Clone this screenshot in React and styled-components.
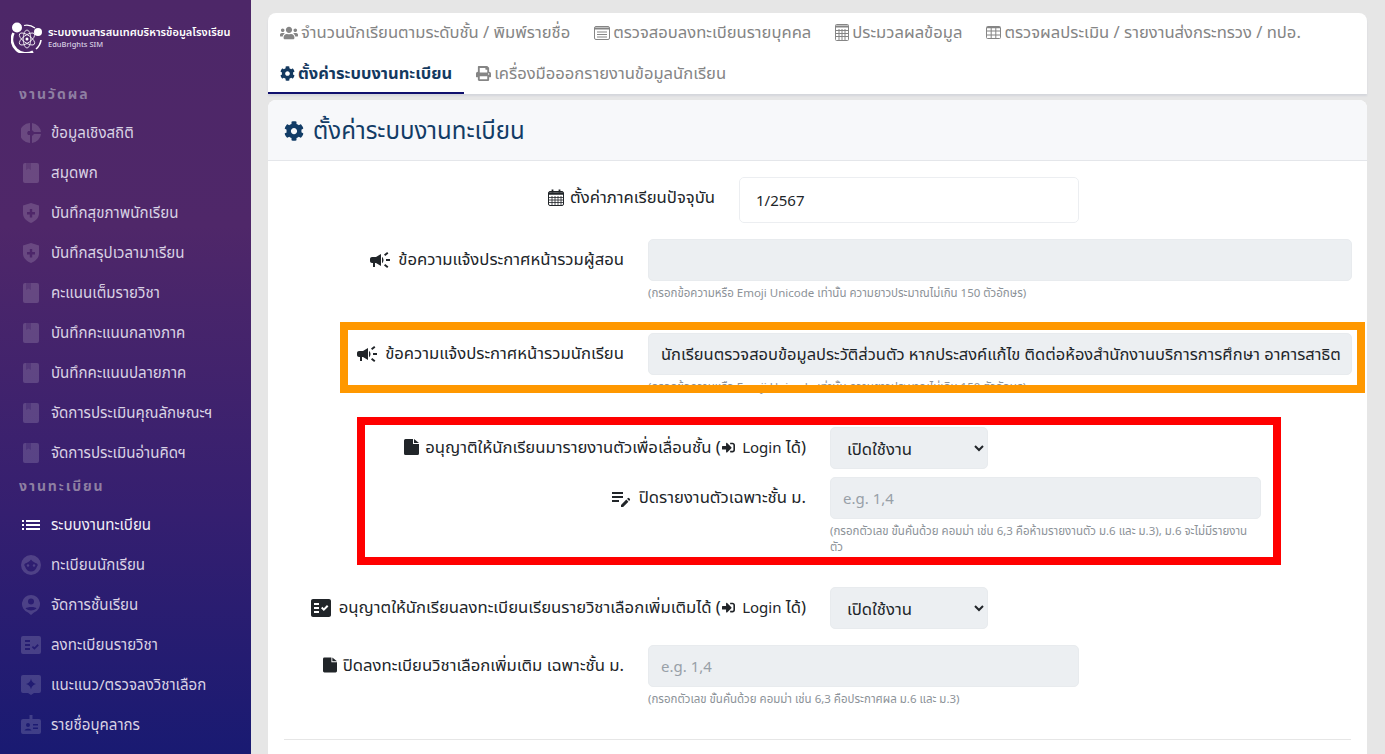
import React from 'react';
import styled, { createGlobalStyle } from 'styled-components';
import { FaUsers, FaCog, FaPrint, FaSignInAlt } from 'react-icons/fa';
import { MdCampaign, MdEditNote, MdFactCheck } from 'react-icons/md';

const GlobalStyle = createGlobalStyle`
  html, body {
    margin: 0;
    height: 100%;
    overflow: hidden;
    background: #e6e6e6;
    font-family: "Noto Sans", "Noto Sans Thai", "Liberation Sans", sans-serif;
  }
  * { box-sizing: border-box; }
`;

const Page = styled.div`
  display: flex;
  height: 754px;
  position: relative;
  overflow: hidden;
`;

const Sidebar = styled.aside`
  width: 251px;
  flex-shrink: 0;
  height: 754px;
  overflow: hidden;
  background: linear-gradient(180deg, #4d2768 0%, #4f2769 30%, #351f70 68%, #191a72 100%);
`;

const Brand = styled.div`
  display: flex;
  align-items: center;
  gap: 5px;
  height: 62px;
  padding: 13px 0 0 11px;
  margin-bottom: 11px;
  color: #fff;
`;

const BrandText = styled.div`
  display: flex;
  flex-direction: column;
  line-height: 12px;
`;

const BrandTitle = styled.span`
  font-size: 11px;
  font-weight: 600;
  white-space: nowrap;
`;

const BrandSub = styled.span`
  font-size: 7.5px;
  font-weight: 500;
  color: #d8cfe3;
`;

const SectionLabel = styled.div`
  height: 40px;
  padding-left: 19px;
  margin-top: ${p => p.$top || 0}px;
  font-size: 14px;
  font-weight: 700;
  line-height: 42px;
  letter-spacing: 1.9px;
  color: #8e7fa2;
`;

const MenuItem = styled.div`
  display: flex;
  align-items: center;
  gap: 10px;
  height: 40px;
  padding-left: 21px;
  font-size: 15.1px;
  white-space: nowrap;
  color: ${p => (p.$active ? '#f2eff7' : '#d9d2e4')};

  svg {
    flex-shrink: 0;
    width: 20px;
    height: 20px;
    color: ${p => (p.$active ? '#ffffff' : 'rgba(255, 255, 255, 0.16)')};
  }
`;

const Main = styled.main`
  flex: 1;
  padding: 13px 18px 0 17px;
  min-width: 0;
`;

const TabCard = styled.nav`
  display: flex;
  flex-wrap: wrap;
  height: 81px;
  background: #fff;
  border-radius: 8px 8px 0 0;
  box-shadow: 0 2px 2px #d4d6dc;
  margin-bottom: 6px;
`;

const Tab = styled.div`
  display: flex;
  align-items: center;
  gap: 3px;
  height: 40px;
  padding: 1px 12px 0;
  font-size: ${p => (p.$active ? 16.5 : 16.6)}px;
  white-space: nowrap;
  color: ${p => (p.$active ? '#14395f' : '#858585')};
  font-weight: ${p => (p.$active ? 700 : 400)};
  border-bottom: 2px solid ${p => (p.$active ? '#10106e' : 'transparent')};

  svg {
    flex-shrink: 0;
  }
`;

const Panel = styled.section`
  background: #fff;
  border-radius: 8px 8px 0 0;
  height: 660px;
  overflow: hidden;
`;

const PanelHeader = styled.header`
  display: flex;
  align-items: center;
  gap: 9px;
  height: 61px;
  padding: 2px 16px 0;
  background: #f7f8fa;
  border-bottom: 1px solid #e4e6ea;
  color: #123c66;
  font-size: 24px;

  svg {
    font-size: 20px;
  }
`;

const PanelBody = styled.div`
  padding: 16px 16px 0;
`;

const FormRow = styled.div`
  display: grid;
  grid-template-columns: ${p => p.$label}px ${p => p.$field}px;
  column-gap: 24px;
  margin-bottom: ${p => (p.$tight ? 8 : 16)}px;
`;

const Label = styled.label`
  display: flex;
  justify-content: flex-end;
  align-items: flex-start;
  gap: 6px;
  padding-top: 9px;
  font-size: 16.7px;
  line-height: 22px;
  white-space: nowrap;
  color: #212529;

  > svg {
    flex-shrink: 0;
    margin-top: ${p => p.$iconTop ?? 3}px;
  }
`;

const InlineIcon = styled.span`
  display: inline-flex;
  margin: 0 3px 0 1px;
  vertical-align: -1px;

  svg {
    font-size: 13px;
  }
`;

const Latin = styled.span`
  font-size: 15px;
`;

const Field = styled.div`
  display: block;
  width: 100%;
  height: ${p => (p.$plain ? 46 : 42)}px;
  padding: 0 ${p => (p.$plain ? 16 : 12)}px;
  line-height: ${p => (p.$plain ? 44 : 40)}px;
  font-size: ${p => (p.$plain || p.$muted ? 15 : 16.5)}px;
  white-space: nowrap;
  overflow: hidden;
  border: 1px solid ${p => (p.$plain ? '#eceef1' : '#e8ebee')};
  border-radius: 5px;
  background: ${p => (p.$plain ? '#fff' : '#eceff2')};
  color: ${p => (p.$muted ? '#98a0a8' : '#212529')};
`;

const SelectBox = styled.select`
  display: block;
  width: 100%;
  height: 42px;
  padding: 0 12px;
  font: inherit;
  font-size: 16.7px;
  border: 1px solid #e8ebee;
  border-radius: 5px;
  background: #eceff2;
  color: #212529;
`;

const Help = styled.div`
  margin: 4px 0 16px;
  font-size: 11.5px;
  line-height: 16px;
  color: #8c9298;
`;

const Divider = styled.hr`
  margin: 0;
  border: 0;
  border-top: 1px solid #e6e6e6;
`;

// annotations drawn on top of the form in the screenshot
const Marker = styled.div`
  position: absolute;
  left: ${p => p.$x}px;
  top: ${p => p.$y}px;
  width: ${p => p.$w}px;
  height: ${p => p.$h}px;
  border: 8px solid ${p => p.$color};
  pointer-events: none;
`;

const Logo = () => (
  <svg width="32" height="31" viewBox="0 0 32 31" fill="none" stroke="#fff" style={{ flexShrink: 0 }}>
    <path d="M2.500 11 A14 14 0 0 0 22 29.500" strokeWidth="2.6" />
    <path d="M13 3.500 A14 14 0 0 1 24 6" strokeWidth="1.2" />
    <path d="M30 18 A14 14 0 0 1 25 27" strokeWidth="1.6" />
    <ellipse cx="16" cy="17" rx="9" ry="3.800" strokeWidth="0.8" transform="rotate(35 16 17)" />
    <ellipse cx="16" cy="17" rx="9" ry="3.800" strokeWidth="0.8" transform="rotate(-35 16 17)" />
    <ellipse cx="16" cy="17" rx="9" ry="3.800" strokeWidth="0.8" transform="rotate(90 16 17)" />
    <circle cx="16" cy="17" r="1.500" fill="#fff" stroke="none" />
    <circle cx="6" cy="5.500" r="5" fill="#fff" stroke="none" />
    <circle cx="27" cy="10" r="4" fill="#fff" stroke="none" />
  </svg>
);

const PieIcon = () => (
  <svg viewBox="0 0 20 20" fill="currentColor">
    <path d="M9 0v8H7.200A2.500 2.500 0 0 0 7.200 12H9v8A10 10 0 0 1 9 0zM11 0a10 10 0 0 1 9 9h-7.200A2.500 2.500 0 0 0 11 7.200zM20 11a10 10 0 0 1-9 9v-7.200a2.500 2.500 0 0 0 1.800-1.800z" />
  </svg>
);

const BookIcon = () => (
  <svg viewBox="0 0 20 20" fill="currentColor">
    <path fillRule="evenodd" d="M4 0h12a2 2 0 0 1 2 2v16a2 2 0 0 1-2 2H4a2 2 0 0 1-2-2V2a2 2 0 0 1 2-2zm1 0v7l2.500-1.800L10 7V0z" />
    <path d="M5 0h5v7L7.500 5.200 5 7z" opacity="0.6" />
  </svg>
);

const ShieldIcon = () => (
  <svg viewBox="0 0 20 20" fill="currentColor">
    <path fillRule="evenodd" d="M10 0l8 2.500v8c0 4.500-3.500 7.500-8 9.500-4.500-2-8-5-8-9.500v-8zM8.800 6v3H6v2.400h2.800v3h2.400v-3H14V9h-2.800V6z" />
  </svg>
);

const FaceIcon = () => (
  <svg viewBox="0 0 20 20" fill="currentColor">
    <path fillRule="evenodd" d="M10 0a10 10 0 1 1 0 20 10 10 0 0 1 0-20zM4 8.500a2 2 0 0 0 0 3c1 3 3 5 6 5s5-2 6-5a2 2 0 0 0 0-3C14 8 11.500 6.500 10 4.500 8.500 6.500 6 8 4 8.500z" />
    <circle cx="7" cy="10.500" r="1.200" />
    <circle cx="13" cy="10.500" r="1.200" />
  </svg>
);

const PersonPinIcon = () => (
  <svg viewBox="0 0 20 20" fill="currentColor">
    <path fillRule="evenodd" d="M10 0a9 9 0 0 1 3 17.500L10 20l-3-2.500A9 9 0 0 1 10 0zm0 3.500a3 3 0 1 0 0 6 3 3 0 0 0 0-6zM4.500 13.500c3 2.600 8 2.600 11 0-1-2-9-2-11 0z" />
  </svg>
);

const ChecklistIcon = () => (
  <svg viewBox="0 0 20 20" fill="currentColor">
    <path fillRule="evenodd" d="M2 1h16a2 2 0 0 1 2 2v14a2 2 0 0 1-2 2H2a2 2 0 0 1-2-2V3a2 2 0 0 1 2-2zm2 4v2h5V5zm0 4v2h5V9zm0 4v2h5v-2zm8-2l-1.200 1.200 2.600 2.600 4.400-4.400L16.600 9l-3.200 3.200z" />
  </svg>
);

const SparkIcon = () => (
  <svg viewBox="0 0 20 20" fill="currentColor">
    <path fillRule="evenodd" d="M2 0h16a2 2 0 0 1 2 2v14a2 2 0 0 1-2 2h-5l-3 2-3-2H2a2 2 0 0 1-2-2V2a2 2 0 0 1 2-2zm8 3.500c-.5 3-2 4.500-5 5.500 3 1 4.500 2.500 5 5.500.5-3 2-4.500 5-5.500-3-1-4.500-2.500-5-5.500z" />
  </svg>
);

const BadgeIcon = () => (
  <svg viewBox="0 0 20 20" fill="currentColor">
    <path fillRule="evenodd" d="M8.500 0h3v4H18a2 2 0 0 1 2 2v11a2 2 0 0 1-2 2H2a2 2 0 0 1-2-2V6a2 2 0 0 1 2-2h6.500zM7 8a2 2 0 1 0 0 4 2 2 0 0 0 0-4zm-3.500 7.500h7c-.5-2.500-6.500-2.500-7 0zM12 9v1.500h5V9zm0 3.500V14h5v-1.500z" />
  </svg>
);

const ListIcon = () => (
  <svg viewBox="0 0 20 20" fill="currentColor">
    <path d="M1 5h2v2H1zM5 5h14v2H5zM1 9h2v2H1zM5 9h14v2H5zM1 13h2v2H1zM5 13h14v2H5z" />
  </svg>
);

const ListAltIcon = () => (
  <svg width="16" height="14" viewBox="0 0 16 14" fill="none" stroke="currentColor">
    <rect x="0.500" y="0.500" width="15" height="13" rx="1.500" />
    <path d="M1 2.500h14" strokeWidth="2" />
    <path d="M3 6h10M3 8.500h10M3 11h10" />
  </svg>
);

const CalculatorIcon = () => (
  <svg width="14" height="17" viewBox="0 0 14 17" fill="none" stroke="currentColor">
    <rect x="0.500" y="0.500" width="13" height="16" rx="1" />
    <path d="M1 2.500h12" strokeWidth="2" />
    <path d="M1 6.500h12M1 9.500h12M1 12.500h12M4 5v11M7 5v11M10 5v11" />
  </svg>
);

const GridIcon = () => (
  <svg width="15" height="13" viewBox="0 0 15 13" fill="none" stroke="currentColor">
    <rect x="0.500" y="0.500" width="14" height="12" rx="1" />
    <path d="M1 1.500h13" strokeWidth="1.500" />
    <path d="M1 5h13M1 9h13M5.200 1v11M9.800 1v11" />
  </svg>
);

const UsersIcon = () => <FaUsers size={18} />;
const GearIcon = () => <FaCog size={15} />;
const PrinterIcon = () => <FaPrint size={15} />;

const CalendarIcon = () => (
  <svg width="16" height="17" viewBox="0 0 16 17" fill="none" stroke="#212529">
    <rect x="0.500" y="2.500" width="15" height="14" rx="1.500" />
    <path d="M1 4.500h14" strokeWidth="2.400" />
    <path d="M1 8.500h14M1 11h14M1 13.500h14M4 7v9M7 7v9M10 7v9M13 7v9" strokeWidth="0.800" />
    <path d="M4.500 0.500v3M11.500 0.500v3" strokeWidth="1.800" />
  </svg>
);

const DocIcon = ({ width = 15 }) => (
  <svg width={width} height="16" viewBox="0 0 15 16" fill="#212529">
    <path d="M1.500 0H9v5h6v9.500a1.500 1.500 0 0 1-1.500 1.500h-12A1.500 1.500 0 0 1 0 14.500v-13A1.500 1.500 0 0 1 1.500 0zM10 0l5 4h-5z" />
  </svg>
);

const groups = [
  {
    title: 'งานวัดผล',
    items: [
      ['ข้อมูลเชิงสถิติ', PieIcon],
      ['สมุดพก', BookIcon],
      ['บันทึกสุขภาพนักเรียน', ShieldIcon],
      ['บันทึกสรุปเวลามาเรียน', ShieldIcon],
      ['คะแนนเต็มรายวิชา', BookIcon],
      ['บันทึกคะแนนกลางภาค', BookIcon],
      ['บันทึกคะแนนปลายภาค', BookIcon],
      ['จัดการประเมินคุณลักษณะฯ', BookIcon],
      ['จัดการประเมินอ่านคิดฯ', BookIcon],
    ],
  },
  {
    title: 'งานทะเบียน',
    top: -8,
    items: [
      ['ระบบงานทะเบียน', ListIcon, true],
      ['ทะเบียนนักเรียน', FaceIcon],
      ['จัดการชั้นเรียน', PersonPinIcon],
      ['ลงทะเบียนรายวิชา', ChecklistIcon],
      ['แนะแนว/ตรวจลงวิชาเลือก', SparkIcon],
      ['รายชื่อบุคลากร', BadgeIcon],
    ],
  },
];

const tabs = [
  ['จำนวนนักเรียนตามระดับชั้น / พิมพ์รายชื่อ', UsersIcon],
  ['ตรวจสอบลงทะเบียนรายบุคคล', ListAltIcon],
  ['ประมวลผลข้อมูล', CalculatorIcon],
  ['ตรวจผลประเมิน / รายงานส่งกระทรวง / ทปอ.', GridIcon],
  ['ตั้งค่าระบบงานทะเบียน', GearIcon, true],
  ['เครื่องมือออกรายงานข้อมูลนักเรียน', PrinterIcon],
];

const LoginNote = () => (
  <>
    {' ('}
    <InlineIcon><FaSignInAlt /></InlineIcon>
    {' '}
    <Latin>Login</Latin>
    {' ได้)'}
  </>
);

const App = () => (
  <Page>
    <GlobalStyle />
    <Sidebar>
      <Brand>
        <Logo />
        <BrandText>
          <BrandTitle>ระบบงานสารสนเทศบริหารข้อมูลโรงเรียน</BrandTitle>
          <BrandSub>EduBrights SIM</BrandSub>
        </BrandText>
      </Brand>
      {groups.map(group => (
        <div key={group.title}>
          <SectionLabel $top={group.top}>{group.title}</SectionLabel>
          {group.items.map(([text, Icon, active]) => (
            <MenuItem key={text} $active={active}>
              <Icon />
              {text}
            </MenuItem>
          ))}
        </div>
      ))}
    </Sidebar>

    <Main>
      <TabCard>
        {tabs.map(([text, Icon, active]) => (
          <Tab key={text} $active={active}>
            <Icon />
            {text}
          </Tab>
        ))}
      </TabCard>

      <Panel>
        <PanelHeader>
          <FaCog />
          ตั้งค่าระบบงานทะเบียน
        </PanelHeader>
        <PanelBody>
          <FormRow $label={431} $field={340}>
            <Label><CalendarIcon />ตั้งค่าภาคเรียนปัจจุบัน</Label>
            <Field $plain>1/2567</Field>
          </FormRow>

          <FormRow $label={340} $field={704}>
            <Label $iconTop={0}><MdCampaign size={24} />ข้อความแจ้งประกาศหน้ารวมผู้สอน</Label>
            <div>
              <Field />
              <Help>(กรอกข้อความหรือ Emoji Unicode เท่านั้น ความยาวประมาณไม่เกิน 150 ตัวอักษร)</Help>
            </div>
          </FormRow>

          <FormRow $label={340} $field={704}>
            <Label $iconTop={0}><MdCampaign size={24} />ข้อความแจ้งประกาศหน้ารวมนักเรียน</Label>
            <div>
              <Field>นักเรียนตรวจสอบข้อมูลประวัติส่วนตัว หากประสงค์แก้ไข ติดต่อห้องสำนักงานบริการการศึกษา อาคารสาธิต</Field>
              <Help>(กรอกข้อความหรือ Emoji Unicode เท่านั้น ความยาวประมาณไม่เกิน 150 ตัวอักษร)</Help>
            </div>
          </FormRow>

          <FormRow $label={522} $field={158} $tight>
            <Label><DocIcon /><span>อนุญาติให้นักเรียนมารายงานตัวเพื่อเลื่อนชั้น<LoginNote /></span></Label>
            <SelectBox defaultValue="on">
              <option value="on">เปิดใช้งาน</option>
            </SelectBox>
          </FormRow>

          <FormRow $label={522} $field={431}>
            <Label $iconTop={0}><MdEditNote size={24} />ปิดรายงานตัวเฉพาะชั้น ม.</Label>
            <div>
              <Field $muted>e.g. 1,4</Field>
              <Help>(กรอกตัวเลข ขั้นคั่นด้วย คอมม่า เช่น 6,3 คือห้ามรายงานตัว ม.6 และ ม.3), ม.6 จะไม่มีรายงาน<br />ตัว</Help>
            </div>
          </FormRow>

          <FormRow $label={522} $field={158}>
            <Label $iconTop={0}><MdFactCheck size={24} /><span>อนุญาตให้นักเรียนลงทะเบียนเรียนรายวิชาเลือกเพิ่มเติมได้<LoginNote /></span></Label>
            <SelectBox defaultValue="on">
              <option value="on">เปิดใช้งาน</option>
            </SelectBox>
          </FormRow>

          <FormRow $label={340} $field={431}>
            <Label><DocIcon width={14} />ปิดลงทะเบียนวิชาเลือกเพิ่มเติม เฉพาะชั้น ม.</Label>
            <div>
              <Field $muted>e.g. 1,4</Field>
              <Help>(กรอกตัวเลข ขั้นคั่นด้วย คอมม่า เช่น 6,3 คือประกาศผล ม.6 และ ม.3)</Help>
            </div>
          </FormRow>

          <Divider />
        </PanelBody>
      </Panel>
    </Main>

    <Marker $x={340} $y={322} $w={1025} $h={71} $color="#ff9800" />
    <Marker $x={357} $y={417} $w={924} $h={148} $color="#ff0000" />
  </Page>
);

export default App;
